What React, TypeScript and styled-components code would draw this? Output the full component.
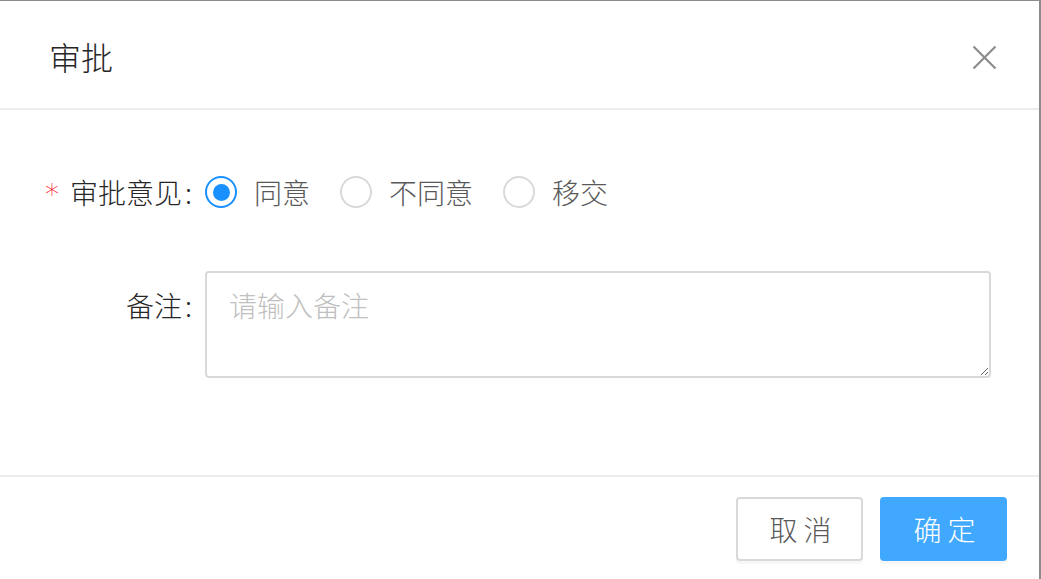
import React from "react";
import styled, { createGlobalStyle } from "styled-components";

const Global = createGlobalStyle`
  html, body { margin: 0; padding: 0; background: #fff; }
  body { font-family: "Noto Sans CJK SC", "Noto Sans", sans-serif; }
  * { box-sizing: border-box; }
`;

const Modal = styled.div`
  width: 1041px;
  height: 579px;
  background: #fff;
  border-top: 1px solid #8c8c8c;
  border-right: 2px solid #8c8c8c;
  display: flex;
  flex-direction: column;
`;

const Header = styled.div`
  height: 109px;
  flex: none;
  display: flex;
  align-items: center;
  justify-content: space-between;
  padding: 0 42px 0 49px;
  border-bottom: 2px solid #ececec;
`;

const Title = styled.div`
  font-size: 32px;
  font-weight: 300;
  color: #262626;
  line-height: 1;
  margin-top: 2px;
`;

const CloseBtn = styled.button`
  width: 26px;
  height: 26px;
  padding: 0;
  border: none;
  background: none;
  display: flex;
  align-items: center;
  justify-content: center;
  cursor: pointer;
  margin-top: 5px;
`;

const Body = styled.div`
  flex: 1;
  padding: 46px 48px 0 0;
  display: flex;
  flex-direction: column;
  gap: 43px;
`;

const Row = styled.div<{ $align?: string }>`
  display: grid;
  grid-template-columns: 192px 1fr;
  column-gap: 13px;
  align-items: ${(p) => p.$align || "center"};
`;

const Label = styled.label<{ $top?: number }>`
  font-size: 28px;
  font-weight: 300;
  color: #262626;
  line-height: 1;
  padding-top: ${(p) => p.$top || 0}px;
  white-space: nowrap;
  display: flex;
  justify-content: flex-end;
  align-items: center;
`;

const Colon = styled.span`
  margin-left: 3px;
`;

const Star = styled.span`
  color: #f5222d;
  font-size: 28px;
  margin-right: 11px;
  font-family: "DejaVu Sans", sans-serif;
  font-weight: 300;
  margin-top: 6px;
`;

const RadioGroup = styled.div`
  display: flex;
  align-items: center;
  height: 72px;
`;

const RadioItem = styled.label`
  display: flex;
  align-items: center;
  margin-right: 30px;
  cursor: pointer;
`;

const Circle = styled.span<{ $checked?: boolean }>`
  width: 32px;
  height: 32px;
  border-radius: 50%;
  border: 2px solid ${(p) => (p.$checked ? "#1890ff" : "#d9d9d9")};
  display: flex;
  align-items: center;
  justify-content: center;
  flex: none;
  &::after {
    content: "";
    width: 17px;
    height: 17px;
    border-radius: 50%;
    background: #1890ff;
    display: ${(p) => (p.$checked ? "block" : "none")};
  }
`;

const RadioText = styled.span`
  font-size: 28px;
  font-weight: 300;
  color: #595959;
  padding-left: 17px;
  line-height: 1;
`;

const TextArea = styled.textarea`
  width: 786px;
  height: 107px;
  border: 2px solid #d9d9d9;
  border-radius: 4px;
  padding: 11px 22px;
  font-size: 28px;
  font-weight: 300;
  line-height: 1.5;
  font-family: "Noto Sans CJK SC", sans-serif;
  color: #595959;
  outline: none;
  resize: vertical;
  &::placeholder { color: #bfbfbf; }
`;

const Footer = styled.div`
  height: 104px;
  flex: none;
  border-top: 2px solid #ececec;
  display: flex;
  justify-content: flex-end;
  align-items: flex-start;
  padding: 20px 32px 0 0;
  gap: 17px;
`;

const Button = styled.button<{ $primary?: boolean }>`
  width: 127px;
  height: 64px;
  border-radius: 4px;
  font-size: 28px;
  font-weight: 300;
  font-family: "Noto Sans CJK SC", sans-serif;
  border: 2px solid ${(p) => (p.$primary ? "#40a9ff" : "#d9d9d9")};
  background: ${(p) => (p.$primary ? "#40a9ff" : "#fff")};
  color: ${(p) => (p.$primary ? "#fff" : "#595959")};
  box-shadow: 0 3px 0 rgba(0, 0, 0, 0.03);
  cursor: pointer;
  line-height: 1;
  padding: 0 0 0 2px;
`;

const options = [
  { label: "同意", checked: true },
  { label: "不同意", checked: false },
  { label: "移交", checked: false },
];

export default function App() {
  return (
    <>
      <Global />
      <Modal>
        <Header>
          <Title>审批</Title>
          <CloseBtn aria-label="close">
            <svg width="25" height="25" viewBox="0 0 25 25">
              <path d="M1.5 1.5 L23.5 23.5 M23.5 1.5 L1.5 23.5" stroke="#8c8c8c" strokeWidth="2.2" fill="none" />
            </svg>
          </CloseBtn>
        </Header>
        <Body>
          <Row>
            <Label>
              <Star>*</Star>审批意见<Colon>:</Colon>
            </Label>
            <RadioGroup>
              {options.map((o) => (
                <RadioItem key={o.label}>
                  <Circle $checked={o.checked} />
                  <RadioText>{o.label}</RadioText>
                </RadioItem>
              ))}
            </RadioGroup>
          </Row>
          <Row $align="start">
            <Label $top={20}>
              备注<Colon>:</Colon>
            </Label>
            <TextArea placeholder="请输入备注" />
          </Row>
        </Body>
        <Footer>
          <Button>取 消</Button>
          <Button $primary>确 定</Button>
        </Footer>
      </Modal>
    </>
  );
}
